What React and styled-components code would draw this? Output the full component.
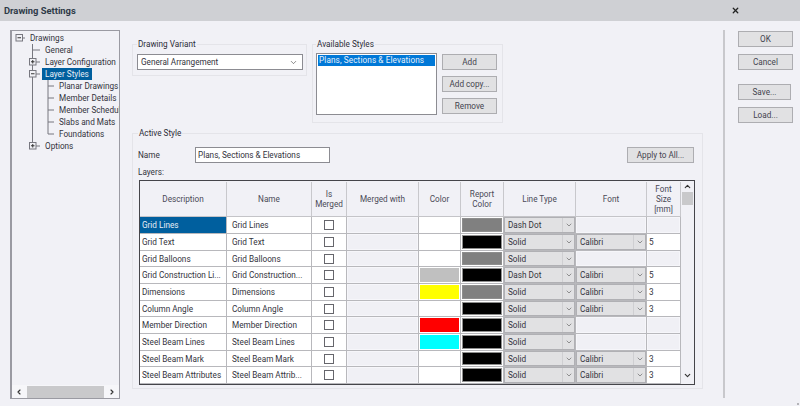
import React from "react";
import styled, { createGlobalStyle } from "styled-components";
import { ChevronDown, ChevronLeft, ChevronRight, ChevronUp, X } from "lucide-react";

const GlobalStyle = createGlobalStyle`
  html, body {
    margin: 0;
    padding: 0;
    width: 800px;
    height: 406px;
    overflow: hidden;
    background: #f1f1f6;
  }
  * {
    box-sizing: border-box;
  }
`;

const treeRows = [
  { label: "Drawings", level: 0, box: "minus" },
  { label: "General", level: 1 },
  { label: "Layer Configuration", level: 1, box: "plus" },
  { label: "Layer Styles", level: 1, box: "minus", selected: true },
  { label: "Planar Drawings", level: 2 },
  { label: "Member Details", level: 2 },
  { label: "Member Schedules", level: 2 },
  { label: "Slabs and Mats", level: 2 },
  { label: "Foundations", level: 2, last: true },
  { label: "Options", level: 1, box: "plus", last: true },
];

const layers = [
  { d: "Grid Lines", n: "Grid Lines", color: "#fff", report: "#808080", line: "Dash Dot", selected: true },
  { d: "Grid Text", n: "Grid Text", color: "#fff", report: "#000", line: "Solid", font: "Calibri", size: "5" },
  { d: "Grid Balloons", n: "Grid Balloons", color: "#fff", report: "#808080", line: "Solid" },
  { d: "Grid Construction Li...", n: "Grid Construction...", color: "#c0c0c0", report: "#000", line: "Dash Dot", font: "Calibri", size: "5" },
  { d: "Dimensions", n: "Dimensions", color: "#ffff00", report: "#808080", line: "Solid", font: "Calibri", size: "3" },
  { d: "Column Angle", n: "Column Angle", color: "#fff", report: "#000", line: "Solid", font: "Calibri", size: "3" },
  { d: "Member Direction", n: "Member Direction", color: "#ff0000", report: "#000", line: "Solid" },
  { d: "Steel Beam Lines", n: "Steel Beam Lines", color: "#00ffff", report: "#000", line: "Solid" },
  { d: "Steel Beam Mark", n: "Steel Beam Mark", color: "#fff", report: "#000", line: "Solid", font: "Calibri", size: "3" },
  { d: "Steel Beam Attributes", n: "Steel Beam Attrib...", color: "#fff", report: "#000", line: "Solid", font: "Calibri", size: "3" },
  // only the top edge of this row is in view, so its texts stay empty
  { d: "", n: "", color: "#fff", report: "#000", line: "", font: " ", size: " " },
];

const TreeGuide = ({ level, box, last }) => {
  const width = level === 0 ? 16 : level === 1 ? 31 : 45;
  const spine = 21.5;
  const inner = 37;
  const stroke = "#77777f";
  return (
    <svg width={width} height="12" viewBox={`0 0 ${width} 12`} style={{ flex: "none" }}>
      {level > 0 && (
        <line x1={spine} y1="0" x2={spine} y2={last && level === 1 ? 6 : 12} stroke={stroke} />
      )}
      {level === 2 && (
        <>
          <line x1={inner} y1="0" x2={inner} y2={last ? 6 : 12} stroke={stroke} />
          <line x1={inner} y1="6" x2="43" y2="6" stroke={stroke} />
        </>
      )}
      {level === 1 && <line x1={spine} y1="6" x2="29" y2="6" stroke={stroke} />}
      {level === 0 && <line x1="11" y1="6" x2="14" y2="6" stroke={stroke} />}
      {box && (
        <g transform={`translate(${level === 0 ? 5 : 18.5} 2.5)`}>
          <rect x="0" y="0" width="6.5" height="6.5" fill="#f1f1f6" stroke="#77777f" />
          <line x1="1.5" y1="3.25" x2="5" y2="3.25" stroke="#333" />
          {box === "plus" && <line x1="3.25" y1="1.5" x2="3.25" y2="5" stroke="#333" />}
        </g>
      )}
    </svg>
  );
};

const App = () => {
  return (
    <Dialog>
      <GlobalStyle />
      <TitleBar>
        <TitleText>Drawing Settings</TitleText>
        <X size={9} strokeWidth={3.4} color="#222" />
      </TitleBar>
      <Content>
        <TreePanel>
          <TreeBody>
            {treeRows.map((row) => (
              <TreeRow key={row.label}>
                <TreeGuide level={row.level} box={row.box} last={row.last} />
                <TreeLabel $selected={row.selected}>{row.label}</TreeLabel>
              </TreeRow>
            ))}
          </TreeBody>
          <TreeScroll>
            <ChevronLeft size={8} strokeWidth={3.5} color="#333" />
            <TreeThumb />
            <ChevronRight size={8} strokeWidth={3.5} color="#333" />
          </TreeScroll>
        </TreePanel>

        <MainColumn>
          <TopRow>
            <VariantGroup>
              <GroupTitle>Drawing Variant</GroupTitle>
              <Combo>
                <span>General Arrangement</span>
                <ChevronDown size={9} strokeWidth={1.5} color="#333" />
              </Combo>
            </VariantGroup>
            <StylesGroup>
              <GroupTitle>Available Styles</GroupTitle>
              <StylesList>
                <StylesItem>Plans, Sections &amp; Elevations</StylesItem>
              </StylesList>
              <StylesButtons>
                <Button>Add</Button>
                <Button>Add copy...</Button>
                <Button>Remove</Button>
              </StylesButtons>
            </StylesGroup>
          </TopRow>

          <ActiveGroup>
            <GroupTitle>Active Style</GroupTitle>
            <NameRow>
              <NameLabel>Name</NameLabel>
              <NameInput>Plans, Sections &amp; Elevations</NameInput>
              <ApplyButton>Apply to All...</ApplyButton>
            </NameRow>
            <LayersLabel>Layers:</LayersLabel>
            <TableFrame>
              <TableBody>
                <HeaderRow>
                  <HeaderCell>Description</HeaderCell>
                  <HeaderCell>Name</HeaderCell>
                  <HeaderCell>Is<br />Merged</HeaderCell>
                  <HeaderCell>Merged with</HeaderCell>
                  <HeaderCell>Color</HeaderCell>
                  <HeaderCell>Report<br />Color</HeaderCell>
                  <HeaderCell>Line Type</HeaderCell>
                  <HeaderCell>Font</HeaderCell>
                  <HeaderCell>Font<br />Size<br />[mm]</HeaderCell>
                </HeaderRow>
                {layers.map((row, i) => (
                  <Row key={i}>
                    <TextCell $selected={row.selected}>{row.d}</TextCell>
                    <NameCell>{row.n}</NameCell>
                    <CheckCell><CheckBox /></CheckCell>
                    <DisabledCell><DisabledBox /></DisabledCell>
                    <Cell><Swatch $color={row.color} /></Cell>
                    <Cell><ReportSwatch $color={row.report} /></Cell>
                    <Cell><DropCell value={row.line} /></Cell>
                    {row.font ? (
                      <Cell><DropCell value={row.font} /></Cell>
                    ) : (
                      <DisabledCell><DisabledBox /></DisabledCell>
                    )}
                    {row.size ? (
                      <SizeCell>{row.size}</SizeCell>
                    ) : (
                      <DisabledCell><DisabledBox /></DisabledCell>
                    )}
                  </Row>
                ))}
              </TableBody>
              <TableScroll>
                <ChevronUp size={9} strokeWidth={3} color="#333" />
                <TableThumb />
                <TableScrollEnd>
                  <ChevronDown size={9} strokeWidth={3} color="#333" />
                </TableScrollEnd>
              </TableScroll>
            </TableFrame>
          </ActiveGroup>
        </MainColumn>

        <Separator />

        <ActionColumn>
          <Button $width={55}>OK</Button>
          <Button $width={55}>Cancel</Button>
          <Button $width={53} $spaced>Save...</Button>
          <Button $width={55}>Load...</Button>
        </ActionColumn>
      </Content>
      <Grip />
    </Dialog>
  );
};

const DropCell = ({ value }) => (
  <Drop>
    <DropText>{value}</DropText>
    <DropArrow>
      <ChevronDown size={8} strokeWidth={1.6} color="#444" />
    </DropArrow>
  </Drop>
);

const Dialog = styled.div`
  position: relative;
  width: 800px;
  height: 406px;
  display: flex;
  flex-direction: column;
  background: #f1f1f6;
  color: #33333c;
  font-family: Roboto, "Liberation Sans", sans-serif;
  font-size: 8.2px;
  line-height: 10px;
`;

const TitleBar = styled.div`
  height: 21px;
  flex: none;
  display: flex;
  align-items: center;
  justify-content: space-between;
  padding: 0 60px 0 4px;
  background: #cfd0d4;
`;

const TitleText = styled.div`
  font-weight: 700;
  font-size: 9.4px;
  color: #2e3a48;
`;

const Content = styled.div`
  flex: 1;
  display: flex;
  align-items: flex-start;
  padding: 9px 0 0 10px;
`;

const TreePanel = styled.div`
  width: 110px;
  height: 369px;
  flex: none;
  display: flex;
  flex-direction: column;
  border: 1px solid #9a9aa2;
  border-left-width: 2px;
  background: #f1f1f6;
`;

const TreeBody = styled.div`
  flex: 1;
  padding-top: 1px;
  overflow: hidden;
  margin-left: -1px;
`;

const TreeRow = styled.div`
  height: 12px;
  display: flex;
  align-items: center;
  white-space: nowrap;
`;

const TreeLabel = styled.span`
  height: 12px;
  padding: 0 3px;
  line-height: 12px;
  background: ${(p) => (p.$selected ? "#005f9e" : "transparent")};
  color: ${(p) => (p.$selected ? "#e8eef5" : "inherit")};
`;

const TreeScroll = styled.div`
  height: 13px;
  flex: none;
  display: flex;
  align-items: center;
  padding: 0 3px;
  gap: 4px;
  background: #f6f6f9;
`;

const TreeThumb = styled.div`
  flex: 1;
  height: 12px;
  background: #c9c9cb;
`;

const MainColumn = styled.div`
  width: 571px;
  flex: none;
  margin-left: 12px;
  padding-top: 9px;
  display: flex;
  flex-direction: column;
  gap: 5px;
`;

const TopRow = styled.div`
  display: flex;
  align-items: flex-start;
  gap: 5px;
`;

const Group = styled.fieldset`
  margin: 0;
  min-width: 0;
  padding: 0;
  border: 1px solid #e4e4e9;
`;

const GroupTitle = styled.legend`
  margin-left: 0;
  padding: 0 1px;
  line-height: 10px;
  color: #2c2c36;
`;

const VariantGroup = styled(Group)`
  width: 175px;
  height: 37px;
  padding: 5px 3px 0 4px;
`;

const Combo = styled.div`
  height: 16px;
  display: flex;
  align-items: center;
  justify-content: space-between;
  padding: 0 4px 0 3px;
  background: #fff;
  border: 1px solid #8c8c92;
`;

const StylesGroup = styled(Group)`
  width: 191px;
  height: 84px;
  padding: 4px 5px 0 3px;
  display: flex;
  gap: 5px;
`;

const StylesList = styled.div`
  width: 121px;
  height: 62px;
  flex: none;
  padding: 1px;
  background: #fff;
  border: 1px solid #8c8c92;
`;

const StylesItem = styled.div`
  height: 11px;
  padding-left: 1px;
  line-height: 10px;
  letter-spacing: 0.11px;
  white-space: nowrap;
  background: #0078d7;
  color: #e8f0fa;
`;

const StylesButtons = styled.div`
  flex: 1;
  display: flex;
  flex-direction: column;
  gap: 6px;
  padding-top: 1px;
`;

const Button = styled.div`
  width: ${(p) => (p.$width ? `${p.$width}px` : "100%")};
  height: 16px;
  flex: none;
  margin-top: ${(p) => (p.$spaced ? "7px" : "0")};
  display: flex;
  align-items: center;
  justify-content: center;
  background: #e1e1e3;
  border: 1px solid #adadb1;
  color: #44444e;
`;

const ActiveGroup = styled(Group)`
  height: 261px;
  padding: 9px 7px 0 5px;
`;

const NameRow = styled.div`
  height: 16px;
  display: flex;
  align-items: center;
`;

const NameLabel = styled.div`
  width: 57px;
  flex: none;
`;

const NameInput = styled.div`
  width: 135px;
  height: 16px;
  flex: none;
  padding-left: 2px;
  line-height: 14px;
  white-space: nowrap;
  background: #fff;
  border: 1px solid #8c8c92;
`;

const ApplyButton = styled(Button)`
  width: 67px;
  margin-left: auto;
  margin-right: 1px;
`;

const LayersLabel = styled.div`
  height: 10px;
  margin-top: 4px;
`;

const TableFrame = styled.div`
  width: 556px;
  height: 205px;
  margin: 3px 0 0 1px;
  display: flex;
  overflow: hidden;
  background: #f1f1f6;
  border: 1px solid #45454a;
`;

const TableBody = styled.div`
  width: 541px;
  flex: none;
  overflow: hidden;
`;

const columns = "87px 85px 35px 72px 42px 43px 72px 71px 34px";

const HeaderRow = styled.div`
  display: grid;
  grid-template-columns: ${columns};
  height: 36px;
  padding-top: 1px;
  border-bottom: 1px solid #c4c4c8;
`;

const HeaderCell = styled.div`
  display: flex;
  align-items: center;
  justify-content: center;
  text-align: center;
  color: #4a4a56;
  border-right: 1px solid #c8c8cc;
`;

const Row = styled.div`
  display: grid;
  grid-template-columns: ${columns};
  grid-template-rows: minmax(0, 1fr);
  height: 17px;

  &:nth-child(3n + 1) {
    height: 16px;
  }
`;

const Cell = styled.div`
  min-width: 0;
  display: flex;
  align-items: stretch;
  background: #fff;
  border-right: 1px solid #b8b8bc;
  border-bottom: 1px solid #b8b8bc;
`;

const TextCell = styled(Cell)`
  align-items: center;
  padding-left: 2px;
  white-space: nowrap;
  overflow: hidden;
  background: ${(p) => (p.$selected ? "#005f9e" : "#fff")};
  color: ${(p) => (p.$selected ? "#e8eef5" : "#33333c")};
`;

const NameCell = styled(TextCell)`
  padding-left: 5px;
`;

const CheckCell = styled(Cell)`
  align-items: center;
  justify-content: center;
`;

const CheckBox = styled.div`
  width: 10px;
  height: 10px;
  background: #fff;
  border: 1px solid #66666c;
`;

const DisabledCell = styled(Cell)`
  background: #f6f6fa;
`;

const DisabledBox = styled.div`
  flex: 1;
  margin: 1px;
  background: #f0f0f5;
`;

const Swatch = styled.div`
  flex: 1;
  margin: 1px;
  background: ${(p) => p.$color};
`;

const ReportSwatch = styled.div`
  flex: 1;
  margin: 1px;
  background: ${(p) => p.$color};
  border: 1px solid #8e8e8e;
`;

const Drop = styled.div`
  flex: 1;
  min-width: 0;
  display: flex;
  background: #e1e1e3;
  border: 1px solid #b0b0b4;
`;

const DropText = styled.div`
  flex: 1;
  padding: 1px 0 0 3px;
  line-height: 12px;
  white-space: nowrap;
`;

const DropArrow = styled.div`
  width: 12px;
  flex: none;
  display: flex;
  align-items: center;
  justify-content: center;
  border-left: 1px solid #cfcfd2;
`;

const SizeCell = styled(Cell)`
  align-items: center;
  padding-left: 2px;
`;

const TableScroll = styled.div`
  flex: 1;
  display: flex;
  flex-direction: column;
  align-items: center;
  padding-top: 1px;
`;

const TableThumb = styled.div`
  width: 11px;
  height: 13px;
  margin-top: 1px;
  background: #c9c9cb;
`;

const TableScrollEnd = styled.div`
  margin-top: auto;
  height: 13px;
`;

const Separator = styled.div`
  width: 2px;
  height: 368px;
  flex: none;
  margin-left: 20px;
  background: #c8c8cc;
`;

const ActionColumn = styled.div`
  margin-left: 13px;
  padding-top: 1px;
  display: flex;
  flex-direction: column;
  gap: 7px;
`;

const Grip = styled.div`
  position: absolute;
  right: 1px;
  bottom: 1px;
  width: 2px;
  height: 2px;
  background: #b4b4b8;
`;

export default App;
